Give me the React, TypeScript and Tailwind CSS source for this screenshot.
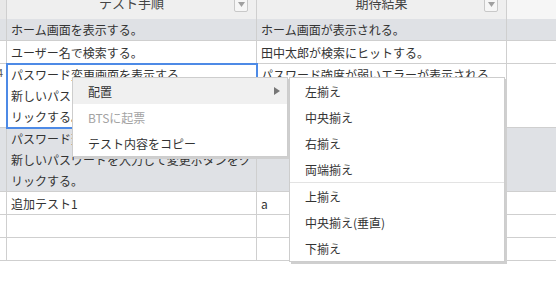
import React from "react";

const FONT = "font-['Noto_Sans_CJK_JP','Noto_Sans',sans-serif]";

function HeaderButton() {
  return (
    <div className="absolute right-[8px] top-[4px] w-[14px] h-[15px] border border-[#c8c8c8] rounded-[2px] bg-[#f6f6f6] flex items-start justify-center pt-[4px]">
      <svg width="7" height="5" viewBox="0 0 7 5">
        <polygon points="0,0 7,0 3.5,5" fill="#a0a0a0" />
      </svg>
    </div>
  );
}

type RowProps = {
  gray?: boolean;
  c1?: React.ReactNode;
  c2?: React.ReactNode;
  rowNum?: string;
  selected?: boolean;
  tall?: boolean;
};

function Row({ gray, c1, c2, rowNum, selected, tall }: RowProps) {
  const bg = gray ? "bg-[#dfe1e5]" : "bg-white";
  const h = tall ? "h-[63px]" : "h-[22px]";
  return (
    <div className={`grid grid-cols-[7px_250px_250px_1fr] border-b border-[#cfcfcf] ${bg}`}>
      <div className={`${h} border-r border-[#cfcfcf] overflow-hidden flex justify-end items-start pr-[3px] text-[11px] leading-[16px] text-[#555]`}>
        {rowNum}
      </div>
      <div className={`${h} relative border-r border-[#cfcfcf] px-[4px] flex flex-col justify-center leading-[21px] whitespace-nowrap overflow-visible`}>
        {c1}
        {selected && (
          <div className="absolute -left-[1px] -top-[1px] -right-[2px] -bottom-[2px] border-2 border-[#4d8ae6] z-10 pointer-events-none" />
        )}
      </div>
      <div className={`${h} border-r border-[#cfcfcf] px-[4px] flex flex-col justify-center leading-[21px] whitespace-nowrap overflow-hidden`}>
        {c2}
      </div>
      <div className={h} />
    </div>
  );
}

function MenuItem({
  children,
  active,
  disabled,
  arrow,
}: {
  children: React.ReactNode;
  active?: boolean;
  disabled?: boolean;
  arrow?: boolean;
}) {
  return (
    <div
      className={`h-[26px] flex items-center justify-between pl-[15px] pr-[7px] pt-[2px] ${
        active ? "bg-[#f0f0f0]" : ""
      } ${disabled ? "text-[#a3a3a3]" : "text-[#333]"}`}
    >
      <span>{children}</span>
      {arrow && (
        <svg width="6" height="8" viewBox="0 0 6 8" className="-mt-[2px]">
          <polygon points="0,0 6,4 0,8" fill="#777" />
        </svg>
      )}
    </div>
  );
}

export default function App() {
  return (
    <div className={`relative w-[556px] h-[307px] overflow-hidden bg-white text-[12px] text-[#333] ${FONT}`}>
      <div className="-mt-[7px]">
        {/* header */}
        <div className="grid grid-cols-[7px_250px_250px_1fr] border-b border-[#cfcfcf] h-[25px]">
          <div className="border-r border-[#cfcfcf] bg-[#e8e8e8]" />
          <div className="relative border-r border-[#cfcfcf] bg-[#efefef] flex items-center justify-center pb-[6px] text-[13px] text-[#444]">
            テスト手順
            <HeaderButton />
          </div>
          <div className="relative border-r border-[#cfcfcf] bg-[#efefef] flex items-center justify-center pb-[6px] text-[13px] text-[#444]">
            期待結果
            <HeaderButton />
          </div>
          <div className="bg-[#f6f6f6]" />
        </div>
        <Row gray c1="ホーム画面を表示する。" c2="ホーム画面が表示される。" />
        <Row c1="ユーザー名で検索する。" c2="田中太郎が検索にヒットする。" />
        <Row
          tall
          selected
          rowNum="4"
          c1={
            <>
              <div>パスワード変更画面を表示する。</div>
              <div>新しいパスワードを入力して変更ボタンをク</div>
              <div>リックする。</div>
            </>
          }
          c2={
            <>
              <div>パスワード強度が弱いエラーが表示される。</div>
              <div>&nbsp;</div>
              <div>&nbsp;</div>
            </>
          }
        />
        <Row
          tall
          gray
          c1={
            <>
              <div>パスワード変更画面を表示する。</div>
              <div>新しいパスワードを入力して変更ボタンをク</div>
              <div>リックする。</div>
            </>
          }
        />
        <Row c1="追加テスト1" c2="a" />
        <Row />
        <Row />
      </div>

      {/* context menu */}
      <div className="absolute left-[72px] top-[77px] w-[216px] bg-white border border-[#cdcdcd] shadow-[2px_2px_0_#cfcfcf] z-20">
        <MenuItem active arrow>
          配置
        </MenuItem>
        <MenuItem disabled>BTSに起票</MenuItem>
        <MenuItem>テスト内容をコピー</MenuItem>
      </div>

      {/* submenu */}
      <div className="absolute left-[289px] top-[77px] w-[216px] bg-white border border-[#cdcdcd] shadow-[2px_2px_0_#cfcfcf] z-30">
        <MenuItem>左揃え</MenuItem>
        <MenuItem>中央揃え</MenuItem>
        <MenuItem>右揃え</MenuItem>
        <MenuItem>両端揃え</MenuItem>
        <div className="border-t border-[#e3e3e3]" />
        <MenuItem>上揃え</MenuItem>
        <MenuItem>中央揃え(垂直)</MenuItem>
        <MenuItem>下揃え</MenuItem>
      </div>
    </div>
  );
}
